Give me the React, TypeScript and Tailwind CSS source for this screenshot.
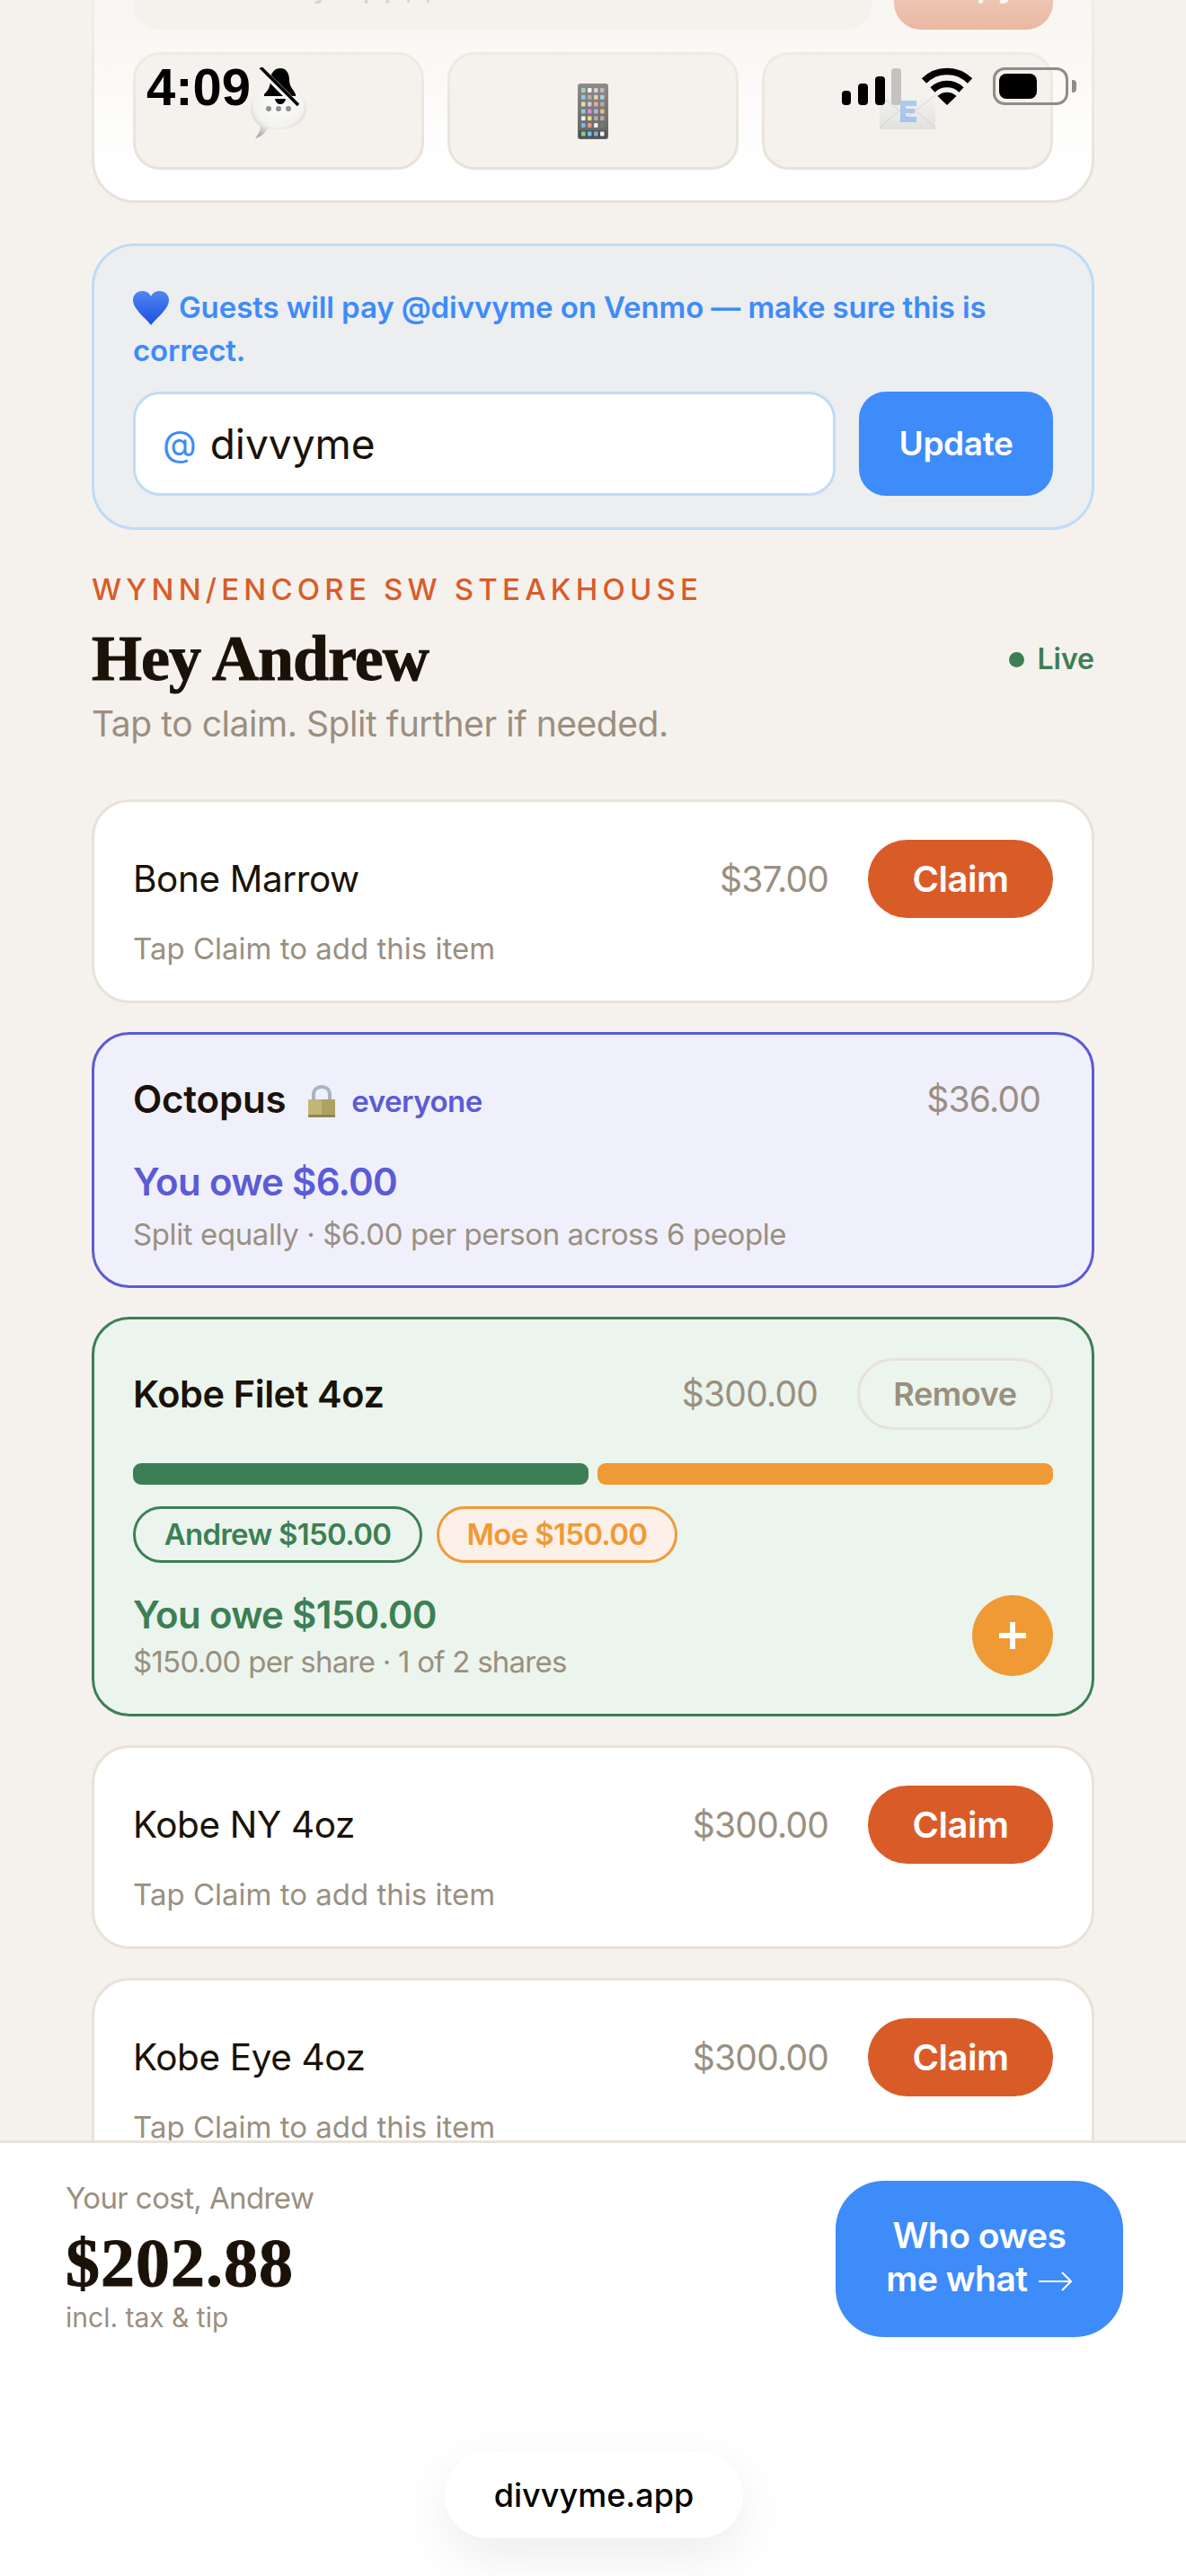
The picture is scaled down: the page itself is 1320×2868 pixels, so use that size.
import React from 'react';

// emoji and status icons, drawn since no colour emoji font is installed
const Balloon = () => (
  <svg width="62" height="60" viewBox="0 0 62 60">
    <defs>
      <radialGradient id="balloonFill" cx="50%" cy="35%" r="68%">
        <stop offset="0%" stopColor="#ffffff" />
        <stop offset="65%" stopColor="#f2f2f2" />
        <stop offset="100%" stopColor="#a4a4a4" />
      </radialGradient>
    </defs>
    <path d="M5 60 C10 54 11 50 10 46 C3 41 0 34 0 26 C0 11 13 1 31 1 C49 1 62 11 62 26 C62 41 49 50 31 50 C27 50 23 50 19 49 C16 54 11 59 5 60 Z" fill="url(#balloonFill)" />
    <circle cx="20" cy="27" r="3" fill="#6c6c6c" />
    <circle cx="31" cy="27" r="3" fill="#6c6c6c" />
    <circle cx="42" cy="27" r="3" fill="#6c6c6c" />
  </svg>
);

const phoneRows = [
  ['#6fc98a', '#f0f0f0', '#cdb6d8', '#9a9a9a'],
  ['#62b4e8', '#8f8f8f', '#d9c38c', '#7cc4d8'],
  ['#e8d878', '#bdbdbd', '#e08a8a', '#8f8f8f'],
  ['#58c4c8', '#c86fc8', '#8fa0e0', '#e8a848'],
  ['#efefef', '#e8d060', '#9a9a9a', '#9a9a9a'],
  ['#62a8e8', '#e08070', '#f0f0f0', '#5a5a5a'],
];

const PhoneEmoji = () => (
  <svg width="34" height="62" viewBox="0 0 34 62">
    <rect width="34" height="62" rx="3" fill="#4c4c4c" />
    {phoneRows.map((row, y) =>
      row.map((c, x) => <rect key={`${x}-${y}`} x={4 + x * 7} y={5 + y * 7.8} width="4.5" height="5" rx="1" fill={c} />),
    )}
    <rect x="1.5" y="52" width="31" height="8.5" fill="#333333" />
    {['#6fc98a', '#58b8e8', '#58a8e8', '#f4f4f4'].map((c, x) => (
      <rect key={c} x={4 + x * 7} y="53.5" width="4.5" height="5" rx="1" fill={c} />
    ))}
  </svg>
);

const EnvelopeEmoji = () => (
  <svg width="62" height="40" viewBox="0 0 62 40">
    <defs>
      <linearGradient id="envFill" x1="0" y1="0" x2="0" y2="1">
        <stop offset="0%" stopColor="#f4f4f2" />
        <stop offset="100%" stopColor="#dcdcda" />
      </linearGradient>
    </defs>
    <rect width="62" height="40" fill="url(#envFill)" />
    <path d="M0 2 L31 26 L62 2 M0 38 L22 19 M62 38 L40 19" stroke="#c8c8c6" strokeWidth="1" fill="none" />
    <path d="M23 8 H41 V14 H29 V17 H39 V22 H29 V26 H41 V32 H23 Z" fill="#8db8f2" />
  </svg>
);

const HeartEmoji = () => (
  <svg width="40" height="38" viewBox="0 0 40 38" className="inline-block align-[-8px] mr-[11px]">
    <defs>
      <linearGradient id="heartFill" x1="0" y1="0" x2="0" y2="1">
        <stop offset="0%" stopColor="#4f87f0" />
        <stop offset="100%" stopColor="#1d4fe0" />
      </linearGradient>
    </defs>
    <path d="M20 38 C12 28 0 20 0 10 C0 4 5 0 10 0 C15 0 18 2 20 6 C22 2 25 0 30 0 C35 0 40 4 40 10 C40 20 28 28 20 38 Z" fill="url(#heartFill)" />
  </svg>
);

const LockEmoji = () => (
  <svg width="32" height="36" viewBox="0 0 32 36" className="mx-[24px] mt-[4px]">
    <path d="M7 18 V11 C7 5 11 2 16 2 C21 2 25 5 25 11 V18" stroke="#a8b4c4" strokeWidth="4" fill="none" />
    <rect x="1" y="16" width="30" height="20" fill="#c2b678" />
    <rect x="16" y="16" width="15" height="20" fill="#aea263" />
    <rect x="1" y="33" width="30" height="3" fill="#8f8552" />
  </svg>
);

const BellSlash = () => (
  <svg width="44" height="44" viewBox="0 0 44 44">
    <path d="M23 1 C30 1 33 7 33 14 C33 22 38 25 40 30 L40 32 L5 32 L5 30 C9 26 12 22 12 14 C12 7 16 1 23 1 Z" fill="#000" />
    <path d="M17 35 H29 C28 40 25 41 23 41 C21 41 18 40 17 35 Z" fill="#000" />
    <path d="M0 1 L43 44" stroke="#f7f5f1" strokeWidth="7" />
    <path d="M1 0 L43 42" stroke="#000" strokeWidth="3.5" />
  </svg>
);

const Signal = () => (
  <svg width="66" height="42" viewBox="0 0 66 42">
    <rect x="0" y="26" width="10" height="16" rx="4" fill="#000" />
    <rect x="18" y="18" width="11" height="24" rx="4" fill="#000" />
    <rect x="37" y="10" width="11" height="32" rx="4" fill="#000" />
    <rect x="55" y="1" width="11" height="41" rx="4" fill="#c4c2be" />
  </svg>
);

const Wifi = () => (
  <svg width="58" height="42" viewBox="0 0 58 42">
    <path d="M3.5 15 A36 36 0 0 1 54.5 15" stroke="#000" strokeWidth="7.5" fill="none" />
    <path d="M13 25 A23 23 0 0 1 45 25" stroke="#000" strokeWidth="7.5" fill="none" />
    <path d="M29 42 L18.5 32 A15 15 0 0 1 39.5 32 Z" fill="#000" />
  </svg>
);

const Battery = () => (
  <div className="flex items-center">
    <div className="w-[84px] h-[42px] rounded-[13px] border-[3px] border-[#8f8d89] p-[4px]">
      <div className="w-[42px] h-full rounded-[8px] bg-black" />
    </div>
    <div className="w-[5px] h-[14px] ml-[4px] rounded-r-[4px] bg-[#8f8d89]" />
  </div>
);

type ItemProps = { name: string; price: string };

const OpenItem = ({ name, price }: ItemProps) => (
  <div className="bg-white border-[3px] border-[#e8e2d8] rounded-[42px] pt-[42px] pb-[36px] px-[43px]">
    <div className="flex items-center justify-between">
      <div className="text-[40.5px] leading-[54px] text-[#1a1208] tracking-[-0.4px]">{name}</div>
      <div className="flex items-center gap-[44px]">
        <div className="text-[39px] leading-[54px] text-[#9a8f80] tracking-[-0.8px]">{price}</div>
        <button className="w-[206px] h-[87px] rounded-full bg-[#d95c28] text-white text-[40px] font-semibold tracking-[-0.5px]">
          Claim
        </button>
      </div>
    </div>
    <div className="mt-[12px] text-[33px] leading-[44px] text-[#9a8f80]">Tap Claim to add this item</div>
  </div>
);

export default function App() {
  return (
    <div className="relative w-[1320px] h-[2868px] overflow-hidden flex flex-col bg-[#f5f2ed] font-['Inter',sans-serif]">
      <main className="flex-1 min-h-0 overflow-hidden px-[102px]">
        {/* share card, scrolled mostly out of view */}
        <div className="mt-[-130px] bg-white border-[3px] border-[#e8e2d8] rounded-[48px] pt-[44px] pb-[34px] px-[43px]">
          <div className="flex gap-[24px]">
            <div className="flex-1 h-[116px] pt-[14px] rounded-[30px] bg-[#f5f2ed] flex items-center px-[42px] text-[39px] text-[#9a8f80]">
              Paste any app, ,
            </div>
            <button className="w-[177px] h-[116px] pt-[14px] rounded-[30px] bg-[#d95c28] text-white text-[39px] font-semibold">Copy</button>
          </div>
          <div className="grid grid-cols-3 gap-[26px] mt-[25px]">
            <div className="h-[131px] rounded-[30px] bg-[#f5f2ed] border-[3px] border-[#e8e2d8] flex items-center justify-center">
              <Balloon />
            </div>
            <div className="h-[131px] rounded-[30px] bg-[#f5f2ed] border-[3px] border-[#e8e2d8] flex items-center justify-center">
              <PhoneEmoji />
            </div>
            <div className="h-[131px] rounded-[30px] bg-[#f5f2ed] border-[3px] border-[#e8e2d8] flex items-center justify-center">
              <EnvelopeEmoji />
            </div>
          </div>
        </div>

        {/* venmo notice */}
        <div className="mt-[45px] bg-[#eceef0] border-[3px] border-[#bfdbf7] rounded-[48px] pt-[44px] pb-[35px] px-[43px]">
          <p className="text-[33px] leading-[48px] font-semibold text-[#3e8bfa] tracking-[-0.1px]">
            <HeartEmoji />
            Guests will pay @divvyme on Venmo — make sure this is correct.
          </p>
          <div className="flex gap-[26px] mt-[22px]">
            <div className="flex-1 h-[116px] bg-white border-[3px] border-[#bfdbf7] rounded-[30px] flex items-center px-[30px] text-[46px] text-[#1a1208]">
              <span className="text-[#3e8bfa] text-[39px] mr-[15px]">@</span>
              divvyme
            </div>
            <button className="w-[216px] h-[116px] rounded-[30px] bg-[#3e8bfa] text-white text-[37px] font-semibold tracking-[-0.4px]">
              Update
            </button>
          </div>
        </div>

        {/* header */}
        <div className="mt-[44px] text-[33px] leading-[44px] font-medium tracking-[5.2px] text-[#d95c28]">WYNN/ENCORE SW STEAKHOUSE</div>
        <div className="mt-[17px] flex items-center justify-between">
          <h1 className="font-['Liberation_Serif',serif] font-bold text-[72px] leading-[76px] tracking-[-1px] [-webkit-text-stroke:1px_#1a1208] text-[#1a1208]">Hey Andrew</h1>
          <div className="flex items-center gap-[14px] mt-[2px] text-[32px] font-semibold text-[#3d7f54]">
            <span className="w-[17px] h-[17px] rounded-full bg-[#3d7f54]" />
            Live
          </div>
        </div>
        <p className="mt-[11px] text-[39px] leading-[48px] text-[#9a8f80] tracking-[-0.45px]">Tap to claim. Split further if needed.</p>

        {/* items */}
        <div className="mt-[60px] flex flex-col gap-[32px]">
          <OpenItem name="Bone Marrow" price="$37.00" />

          <div className="bg-[#f0f0fd] border-[3px] border-[#5b5bd6] rounded-[42px] pt-[45px] pb-[35px] px-[43px]">
            <div className="flex items-center justify-between pr-[14px]">
              <div className="flex items-center">
                <span className="text-[42px] leading-[54px] font-semibold text-[#1a1208] tracking-[-0.2px]">Octopus</span>
                <LockEmoji />
                <span className="text-[33px] leading-[50px] font-semibold text-[#5b5bd6] mt-[4px] -ml-[7px] tracking-[-0.5px]">everyone</span>
              </div>
              <div className="text-[39px] leading-[54px] text-[#9a8f80] tracking-[-0.8px]">$36.00</div>
            </div>
            <div className="mt-[37px] text-[42px] leading-[56px] font-semibold text-[#5b5bd6] tracking-[-0.7px]">You owe $6.00</div>
            <div className="mt-[8px] text-[33px] leading-[44px] text-[#9a8f80] tracking-[-0.4px]">Split equally · $6.00 per person across 6 people</div>
          </div>

          <div className="bg-[#ebf5ed] border-[3px] border-[#3d7f54] rounded-[42px] pt-[43px] pb-[36px] px-[43px]">
            <div className="flex items-center justify-between">
              <div className="text-[41.5px] leading-[54px] font-semibold text-[#1a1208] tracking-[-0.4px]">Kobe Filet 4oz</div>
              <div className="flex items-center gap-[44px]">
                <div className="text-[39px] leading-[54px] text-[#9a8f80] tracking-[-0.8px]">$300.00</div>
                <button className="w-[218px] h-[80px] rounded-full border-[3px] border-[#e8e2d8] text-[36px] font-semibold text-[#9a8f80] tracking-[-0.4px]">
                  Remove
                </button>
              </div>
            </div>
            <div className="mt-[37px] flex gap-[10px]">
              <div className="flex-1 h-[24px] rounded-[9px] bg-[#3d7f54]" />
              <div className="flex-1 h-[24px] rounded-[9px] bg-[#f09a36]" />
            </div>
            <div className="mt-[24px] flex gap-[16px]">
              <div className="w-[322px] h-[63px] rounded-full border-[3px] border-[#3d7f54] flex items-center justify-center text-[33px] font-semibold text-[#3d7f54] tracking-[-0.7px]">
                Andrew $150.00
              </div>
              <div className="w-[268px] h-[63px] rounded-full border-[3px] border-[#f09a36] bg-[#fdf0e8] flex items-center justify-center text-[33px] font-semibold text-[#f09a36] tracking-[-0.7px]">
                Moe $150.00
              </div>
            </div>
            <div className="mt-[30px] flex items-center justify-between">
              <div>
                <div className="text-[42px] leading-[56px] font-semibold text-[#3d7f54] tracking-[-0.7px]">You owe $150.00</div>
                <div className="mt-[2px] text-[33px] leading-[44px] text-[#9a8f80] tracking-[-0.75px]">$150.00 per share · 1 of 2 shares</div>
              </div>
              <button className="w-[90px] h-[90px] rounded-full bg-[#f09a36] flex items-center justify-center">
                <svg width="30" height="30" viewBox="0 0 30 30">
                  <path d="M15 0 V30 M0 15 H30" stroke="#fff" strokeWidth="6" />
                </svg>
              </button>
            </div>
          </div>

          <OpenItem name="Kobe NY 4oz" price="$300.00" />
          <OpenItem name="Kobe Eye 4oz" price="$300.00" />
        </div>
      </main>

      {/* sticky total */}
      <footer className="h-[485px] shrink-0 bg-white border-t-[3px] border-[#e8e2d8] pt-[42px] pl-[73px] pr-[70px]">
        <div className="flex items-center justify-between">
          <div className="-mt-[5px]">
            <div className="text-[33px] leading-[44px] text-[#9a8f80] tracking-[-0.6px]">Your cost, Andrew</div>
            <div className="mt-[12px] font-['Liberation_Serif',serif] font-bold text-[76px] leading-[76px] tracking-[1px] [-webkit-text-stroke:1px_#1a1208] text-[#1a1208]">$202.88</div>
            <div className="mt-[3px] text-[30px] leading-[40px] text-[#9a8f80]">incl. tax &amp; tip</div>
          </div>
          <button className="w-[320px] h-[174px] pb-[4px] rounded-[54px] bg-[#3e8bfa] text-white text-[39px] leading-[48px] font-semibold tracking-[-0.5px]">
            Who owes
            <br />
            me what
            <svg width="38" height="24" viewBox="0 0 38 24" className="inline-block ml-[12px] align-[-1px]">
              <path d="M0 12 H36 M26 2 L36 12 L26 22" stroke="#fff" strokeWidth="2" fill="none" />
            </svg>
          </button>
        </div>
      </footer>

      {/* fade behind the status bar */}
      <div className="absolute top-0 left-0 w-full h-[190px] bg-gradient-to-b from-[#f5f2ed]/70 via-[#f5f2ed]/60 via-[20%] to-transparent" />

      {/* status bar */}
      <div className="absolute top-[75px] left-[163px] flex items-start">
        <span className="font-['Liberation_Sans',sans-serif] font-bold text-[58px] leading-[44px] text-black">4:09</span>
        <span className="ml-[10px]">
          <BellSlash />
        </span>
      </div>
      <div className="absolute top-[75px] left-[937px] flex items-start gap-[22px]">
        <Signal />
        <Wifi />
        <Battery />
      </div>

      {/* browser url pill */}
      <div className="absolute left-[495px] top-[2730px] w-[332px] h-[96px] rounded-full bg-white flex items-center justify-center text-[36px] font-medium text-black shadow-[0_20px_60px_rgba(0,0,0,0.08)]">
        divvyme.app
      </div>
    </div>
  );
}
